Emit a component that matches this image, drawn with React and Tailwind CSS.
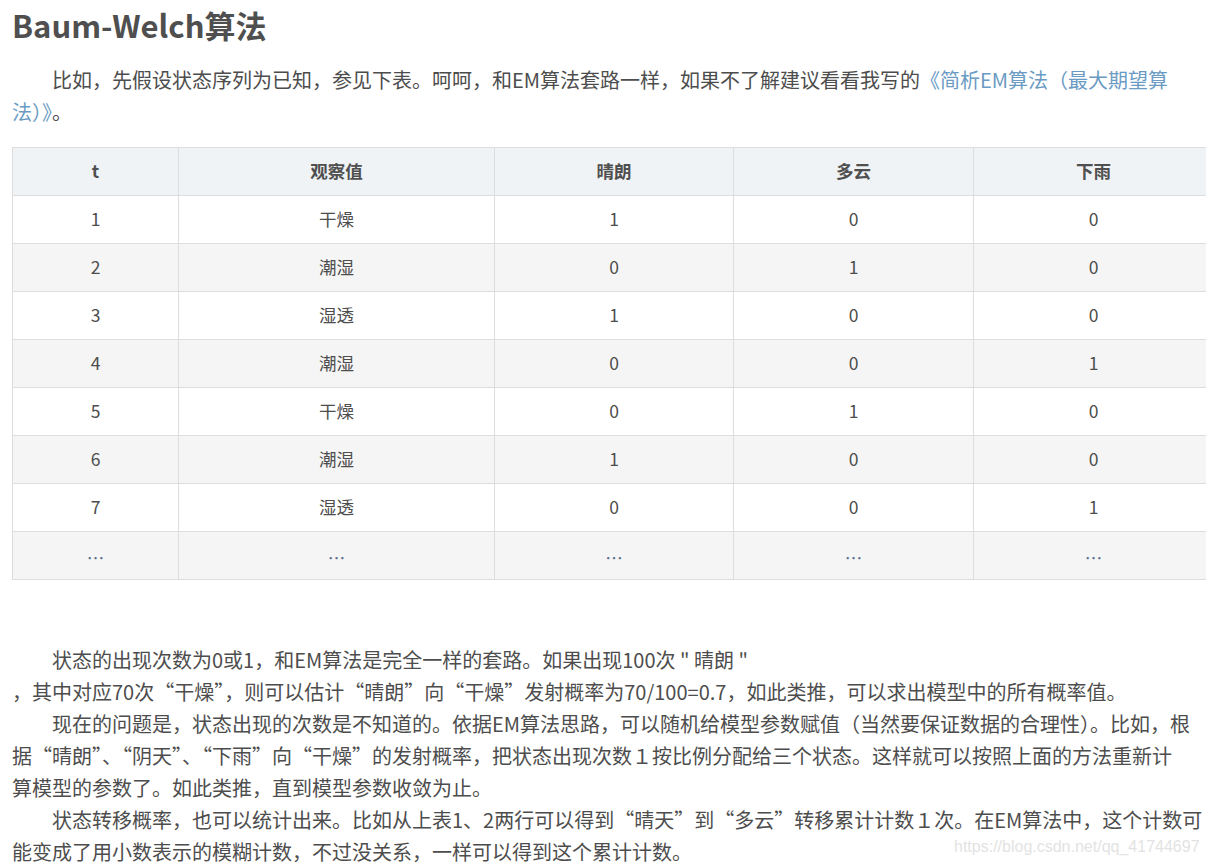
const rows = [
  ['1', '干燥', '1', '0', '0'],
  ['2', '潮湿', '0', '1', '0'],
  ['3', '湿透', '1', '0', '0'],
  ['4', '潮湿', '0', '0', '1'],
  ['5', '干燥', '0', '1', '0'],
  ['6', '潮湿', '1', '0', '0'],
  ['7', '湿透', '0', '0', '1'],
]

const headers = ['t', '观察值', '晴朗', '多云', '下雨']
const widths = ['w-[166px]', 'w-[316px]', 'w-[239px]', 'w-[240px]', 'w-[240px]']

export default function App() {
  return (
    <div
      className="relative w-[1206px] h-[863px] overflow-hidden bg-white text-[#4d4d4d]"
      style={{ fontFamily: '"Noto Sans CJK SC", "Noto Sans", sans-serif' }}
    >
      <div className="w-[1213px] pl-[12px]">
        {/* 标题 */}
        <h1 className="text-[31px] leading-[50px] font-bold text-[#4f4f4f]">Baum-Welch算法</h1>

        {/* 第一段 */}
        <p className="text-[20px] leading-[32px] mt-[14px] indent-[40px] whitespace-nowrap">
          比如，先假设状态序列为已知，参见下表。呵呵，和EM算法套路一样，如果不了解建议看看我写的
          <a href="#" className="text-[#6b9bc3]">《简析EM算法（最大期望算</a>
          <br />
          <a href="#" className="text-[#6b9bc3]">法）》</a>。
        </p>

        {/* 表格 */}
        <table className="mt-[19px] border-collapse text-[17.5px] table-fixed w-[1201px]">
          <thead>
            <tr className="bg-[#eff3f5] h-[48px]">
              {headers.map((h, i) => (
                <th key={h} className={`${widths[i]} border border-[#dddddd] font-bold text-center text-[#4f4f4f]`}>
                  {h}
                </th>
              ))}
            </tr>
          </thead>
          <tbody>
            {rows.map((r, i) => (
              <tr key={i} className={`h-[48px] ${i % 2 === 1 ? 'bg-[#f5f5f5]' : 'bg-white'}`}>
                {r.map((c, j) => (
                  <td key={j} className="border border-[#dddddd] text-center">
                    {c}
                  </td>
                ))}
              </tr>
            ))}
            <tr className="h-[48px] bg-[#f5f5f5]">
              {headers.map((h) => (
                <td key={h} className="border border-[#dddddd] text-center text-[#5b6f8c] pt-[6px]">
                  …
                </td>
              ))}
            </tr>
          </tbody>
        </table>

        {/* 后续段落 */}
        <div className="mt-[64px] text-[20px] leading-[32px] whitespace-nowrap">
          <p className="indent-[40px]">
            状态的出现次数为0或1，和EM算法是完全一样的套路。如果出现100次 " 晴朗 "
            <br />
            ，其中对应70次“干燥”，则可以估计“晴朗”向“干燥”发射概率为70/100=0.7，如此类推，可以求出模型中的所有概率值。
          </p>
          <p className="indent-[40px]">
            现在的问题是，状态出现的次数是不知道的。依据EM算法思路，可以随机给模型参数赋值（当然要保证数据的合理性）。比如，根
            <br />
            据“晴朗”、“阴天”、“下雨”向“干燥”的发射概率，把状态出现次数１按比例分配给三个状态。这样就可以按照上面的方法重新计
            <br />
            算模型的参数了。如此类推，直到模型参数收敛为止。
          </p>
          <p className="indent-[40px]">
            状态转移概率，也可以统计出来。比如从上表1、2两行可以得到“晴天”到“多云”转移累计计数１次。在EM算法中，这个计数可
            <br />
            能变成了用小数表示的模糊计数，不过没关系，一样可以得到这个累计计数。
          </p>
        </div>
      </div>

      {/* 水印 */}
      <div
        className="absolute left-[954px] top-[835px] text-[16px] text-[#e3e3e3] whitespace-nowrap"
        style={{ fontFamily: '"Liberation Sans", Arial, sans-serif' }}
      >
        https://blog.csdn.net/qq_41744697
      </div>
    </div>
  )
}
